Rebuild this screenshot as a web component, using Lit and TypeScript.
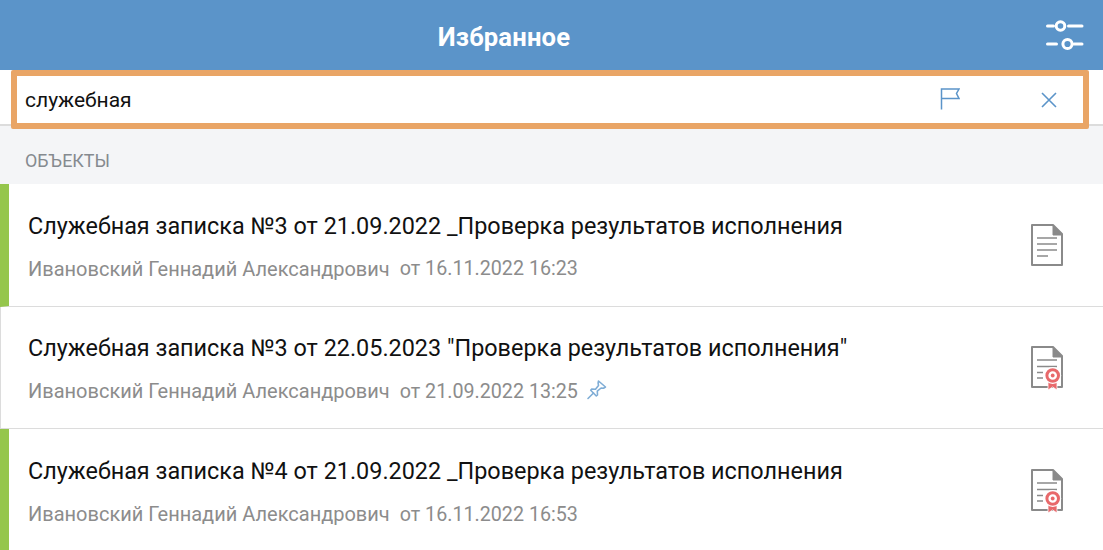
import { LitElement, html, css, svg } from "lit";
import { customElement } from "lit/decorators.js";

const docBase = svg`
  <path d="M2 3H23L32 12V43H2Z" fill="none" stroke="#8a8a8a" stroke-width="2" stroke-linejoin="round"/>
  <path d="M23 3L32 12V13H23Z" fill="#8a8a8a" stroke="#8a8a8a" stroke-width="1" stroke-linejoin="round"/>`;

const plainDoc = html`<svg class="doc" width="35" height="46" viewBox="0 0 35 46">${docBase}
  <path d="M7 16H27M7 22H27M7 28H27M7 34H18" stroke="#8a8a8a" stroke-width="1.5" fill="none"/></svg>`;

const sealDoc = html`<svg class="doc" width="35" height="46" viewBox="0 0 35 46">${docBase}
  <path d="M7 16H27M7 22.5H27M7 28.5H13M7 34H13" stroke="#8a8a8a" stroke-width="1.5" fill="none"/>
  <path d="M18 37V46L22.7 43L27 46V37Z" fill="#e8696b" stroke="#fff" stroke-width="0.8"/>
  <circle cx="22.7" cy="31.5" r="8.5" fill="#fff"/>
  <circle cx="22.7" cy="31.5" r="5.8" fill="none" stroke="#e8696b" stroke-width="3"/>
  <circle cx="22.7" cy="31.5" r="1.9" fill="#e8696b"/></svg>`;

const pin = html`<svg class="pin" width="21" height="20" viewBox="0 0 20 20" fill="none" stroke="#7fadd6" stroke-width="1.6" stroke-linejoin="round" stroke-linecap="round">
  <path d="M12 1L19 7L17 8.2L14.6 8L10.8 11.2L11 15L9.8 16L4.2 10.2L5.2 9L9 9.3L12 5.4L11.6 3Z"/>
  <path d="M7 13L1.5 18.5"/></svg>`;

const rows = [
  { title: "Служебная записка №3 от 21.09.2022 _Проверка результатов исполнения", date: "от 16.11.2022 16:23", mark: true, icon: plainDoc, pinned: false },
  { title: 'Служебная записка №3 от 22.05.2023 "Проверка результатов исполнения"', date: "от 21.09.2022 13:25", mark: false, icon: sealDoc, pinned: true },
  { title: "Служебная записка №4 от 21.09.2022 _Проверка результатов исполнения", date: "от 16.11.2022 16:53", mark: true, icon: sealDoc, pinned: false },
];

@customElement("app-root")
export class AppRoot extends LitElement {
  static styles = css`
    :host { display: block; width: 1103px; height: 550px; overflow: hidden; background: #fff; font-family: Roboto, "Liberation Sans", sans-serif; }
    .header { height: 70px; background: #5b94c9; display: flex; align-items: center; justify-content: center; position: relative; color: #fff; font-size: 25.6px; font-weight: 700; letter-spacing: 0.2px; padding: 4px 95px 0 0; box-sizing: border-box; }
    .settings { position: absolute; right: 19px; top: 19px; }
    .searchrow { height: 56px; box-sizing: border-box; border-bottom: 2px solid #dcdcdc; padding: 0 14px 0 11px; position: relative; z-index: 1; }
    .search { height: 59px; box-sizing: border-box; border: 6px solid #e9a566; border-radius: 2px; background: #fff; display: flex; align-items: center; padding-left: 8px; font-size: 21px; color: #111; }
    .search .text { flex: 1; }
    .flag { margin: -2px 81px 0 0; }
    .close { margin-right: 26px; }
    .section { height: 58px; background: #f4f5f7; display: flex; align-items: center; padding-left: 25px; padding-top: 10px; box-sizing: border-box; font-size: 17.9px; color: #858a8f; }
    .row { height: 122.5px; box-sizing: border-box; border-bottom: 1px solid #dcdcdc; border-left: 1px solid #dcdcdc; display: flex; align-items: center; padding: 3px 38px 0 27px; position: relative; }
    .row:last-child { border-bottom: none; }
    .row.mark { border-left: 9px solid #95c64c; padding-left: 19px; }
    .body { flex: 1; display: flex; flex-direction: column; gap: 17px; }
    .title { font-size: 23.4px; line-height: 28px; color: #111; }
    .meta { display: flex; align-items: center; gap: 10px; height: 24px; font-size: 20px; color: #8c8c8c; }
    .date { font-size: 19.7px; }
    .pin { margin-left: -2px; margin-top: -2px; }
    .doc { display: block; margin-top: -3px; }
  `;

  render() {
    return html`
      <div class="header">Избранное
        <svg class="settings" width="38" height="32" viewBox="0 0 38 32" fill="none" stroke="#fff" stroke-width="3" stroke-linecap="round">
          <path d="M1.5 7H7.5M22.5 7H36M1.5 25H10.5M28 25H36"/>
          <circle cx="14.5" cy="7" r="4.3"/>
          <circle cx="21.5" cy="25" r="4.6"/>
        </svg>
      </div>
      <div class="searchrow">
        <div class="search">
          <span class="text">служебная</span>
          <svg class="flag" width="20" height="22" viewBox="0 0 20 22" fill="none" stroke="#5b94c9" stroke-width="1.5">
            <path d="M1.5 21.5V1H19L16.5 5.5L19 10.5H1.5"/>
          </svg>
          <svg class="close" width="16" height="16" viewBox="0 0 16 16" fill="none" stroke="#5b94c9" stroke-width="1.6">
            <path d="M1 1L15 15M15 1L1 15"/>
          </svg>
        </div>
      </div>
      <div class="section">ОБЪЕКТЫ</div>
      ${rows.map(r => html`
        <div class="row ${r.mark ? "mark" : ""}">
          <div class="body">
            <div class="title">${r.title}</div>
            <div class="meta"><span>Ивановский Геннадий Александрович</span><span class="date">${r.date}</span>${r.pinned ? pin : ""}</div>
          </div>
          ${r.icon}
        </div>`)}
    `;
  }
}
